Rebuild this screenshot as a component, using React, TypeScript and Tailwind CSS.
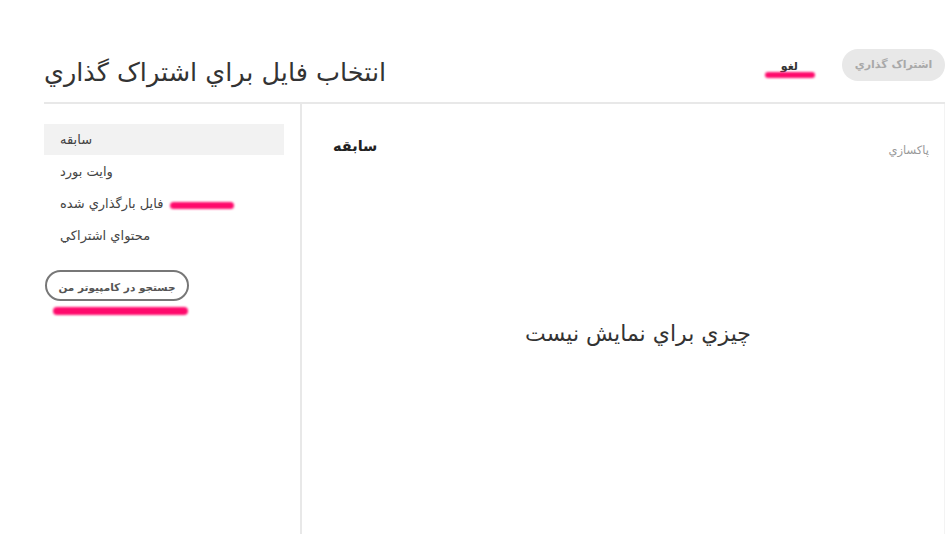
import React from "react";

const font = { fontFamily: '"DejaVu Sans", "Noto Sans", sans-serif' };

function Pink({ className }: { className: string }) {
  return <div className={`absolute rounded-full bg-[#ff0a6c] blur-[1px] ${className}`} />;
}

export default function App() {
  return (
    <div className="w-[950px] h-[534px] bg-white overflow-hidden text-[#333]" style={font}>
      <div className="ml-[44px] mr-[5px] h-full flex flex-col">
        <div className="h-[104px] border-b-2 border-[#e8e8e8] flex items-end pb-[15px] relative">
          <div className="text-[25.5px] leading-[30px] text-[#333]">انتخاب فايل براي اشتراک گذاري</div>
          <div className="ml-auto flex items-center self-start mt-[49px]">
            <div className="relative mr-[44px]">
              <span className="text-[11px] font-bold text-[#333]">لغو</span>
              <Pink className="left-[-16px] top-[19px] w-[50px] h-[6px]" />
            </div>
            <div className="w-[103px] h-[32px] rounded-full bg-[#e8e8e8] flex items-center justify-center text-[11px] font-bold text-[#a9a9a9]">
              اشتراک گذاري
            </div>
          </div>
        </div>
        <div className="flex flex-1">
          <div className="w-[258px] border-r-2 border-[#e8e8e8] pr-[16px] pt-[20px]">
            <div className="h-[31px] bg-[#f2f2f2] pl-[16px] flex items-center text-[13px] text-[#444]">سابقه</div>
            <div className="h-[33px] pl-[16px] flex items-center text-[13px] text-[#444]">وايت بورد</div>
            <div className="h-[32px] pl-[16px] flex items-center text-[13px] text-[#444] relative">
              فايل بارگذاري شده
              <Pink className="left-[126px] top-[14px] w-[64px] h-[7px]" />
            </div>
            <div className="h-[32px] pl-[16px] flex items-center text-[13px] text-[#444]">محتواي اشتراکي</div>
            <div className="relative mt-[18px] ml-[1px]">
              <div className="w-[144px] h-[31px] rounded-full border-2 border-[#777] flex items-center justify-center pt-[4px] text-[10.5px] font-bold text-[#555]">
                جستجو در کامپيوتر من
              </div>
              <Pink className="left-[8px] top-[37px] w-[135px] h-[8px]" />
            </div>
          </div>
          <div className="flex-1 flex flex-col border-r border-[#f3f3f3] pl-[31px] pr-[15px] pt-[32px]">
            <div className="flex items-start">
              <div className="text-[14.5px] font-bold text-[#222]">سابقه</div>
              <div className="ml-auto text-[11.5px] text-[#999] mt-[6px]">پاکسازي</div>
            </div>
            <div className="flex justify-center mt-[158px] pl-[14px]">
              <div className="text-[22px] text-[#333]">چيزي براي نمايش نيست</div>
            </div>
          </div>
        </div>
      </div>
    </div>
  );
}
